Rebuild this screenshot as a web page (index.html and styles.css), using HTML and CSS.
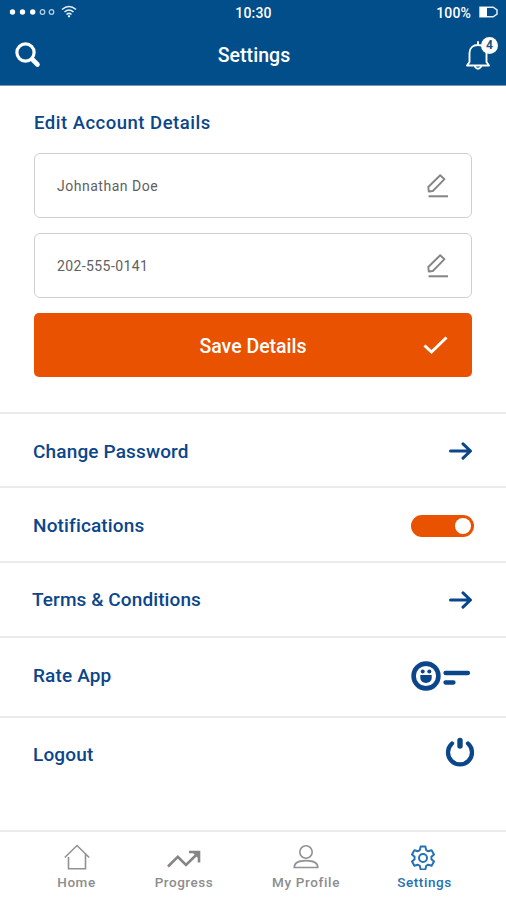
FILE: index.html
```html
<!DOCTYPE html>
<html lang="en">
<head>
<meta charset="utf-8">
<title>Settings</title>
<link rel="stylesheet" href="styles.css">
</head>
<body>
<div class="app">
  <header class="header">
    <div class="status">
      <div class="signal">
        <svg width="68" height="14" viewBox="0 0 68 14" fill="#fff">
          <circle cx="3.5" cy="7" r="2.7"/><circle cx="13.5" cy="7" r="2.7"/><circle cx="23.7" cy="7" r="2.7"/>
          <g fill="none" stroke="#bcd3e8" stroke-width="1.2"><circle cx="33.5" cy="7" r="2.3"/><circle cx="42.5" cy="7" r="2.3"/></g>
          <g fill="none" stroke="#e3eef7" stroke-width="1.6"><path d="M53 4.500Q60 -1.500 67 4.500"/><path d="M55.500 7Q60 3 64.500 7"/><path d="M57.500 9.500Q60 7.300 62.500 9.500"/></g>
          <path d="M58.600 11L60 9.900 61.400 11 60 12.800z"/>
        </svg>
      </div>
      <div class="time">10:30</div>
      <div class="power"><span>100%</span>
        <svg width="19" height="12" viewBox="0 0 19 12"><path d="M1 1.200H14.200L18 4V8L14.200 10.800H1z" fill="none" stroke="#e3eef7" stroke-width="1.500"/><path d="M1 1H8V11H1z" fill="#fff"/></svg>
      </div>
    </div>
    <div class="bar">
      <svg class="search" width="26" height="26" viewBox="0 0 26 26" fill="none" stroke="#fff"><circle cx="10.500" cy="10.500" r="8.600" stroke-width="3.200"/><path d="M17.500 17.500L22.500 22.500" stroke-width="4.600" stroke-linecap="round"/></svg>
      <h1>Settings</h1>
      <div class="bell">
        <svg width="26" height="30" viewBox="0 0 26 30" fill="none" stroke="#fff" stroke-width="1.900" stroke-linejoin="round" stroke-linecap="round"><path d="M13 2V4.500M2 25.500H24L21.500 22V13C21.500 8 18 5 13 5S4.500 8 4.500 13V22z"/><path d="M9.800 26.500Q13 31 16.200 26.500"/></svg>
        <span class="badge">4</span>
      </div>
    </div>
  </header>

  <section class="account">
    <h2>Edit Account Details</h2>
    <div class="field"><span>Johnathan Doe</span>
      <svg width="22" height="24" viewBox="0 0 22 24" fill="none" stroke="#858585" stroke-width="1.900" stroke-linejoin="round"><path d="M1.300 13L13.200 1.300 17.500 5.200 5.800 17 1.800 17.500z"/><path d="M1.500 22.300H21" stroke-width="2"/></svg>
    </div>
    <div class="field"><span class="phone">202-555-0141</span>
      <svg width="22" height="24" viewBox="0 0 22 24" fill="none" stroke="#858585" stroke-width="1.900" stroke-linejoin="round"><path d="M1.300 13L13.200 1.300 17.500 5.200 5.800 17 1.800 17.500z"/><path d="M1.500 22.300H21" stroke-width="2"/></svg>
    </div>
    <button class="save"><span>Save Details</span>
      <svg width="25" height="19" viewBox="0 0 25 19" fill="none" stroke="#fff" stroke-width="3"><path d="M1.500 9.500L8.500 16 23.500 1.500"/></svg>
    </button>
  </section>

  <main class="list">
    <div class="row"><span class="pw">Change Password</span>
      <svg class="arrow" width="24" height="18" viewBox="0 0 24 18"><path d="M1.500 9H21M14 1.800L21.500 9 14 16.200"/></svg></div>
    <div class="row toggle-row"><span class="notif">Notifications</span><span class="toggle"><i></i></span></div>
    <div class="row"><span class="terms">Terms &amp; Conditions</span>
      <svg class="arrow" width="24" height="18" viewBox="0 0 24 18"><path d="M1.500 9H21M14 1.800L21.500 9 14 16.200"/></svg></div>
    <div class="row rate"><span class="rate-label">Rate App</span>
      <svg class="face" width="60" height="30" viewBox="0 0 60 30" fill="#0b468b"><circle cx="15" cy="15" r="12.400" fill="none" stroke="#0b468b" stroke-width="4.600"/><circle cx="11.700" cy="10.600" r="2"/><circle cx="18.300" cy="10.600" r="2"/><path d="M9.300 14H20.700V17A5.700 5 0 0 1 9.300 17z"/><g stroke="#0b468b" stroke-width="4.300" stroke-linecap="round"><path d="M34.500 12H57M34.500 21.500H42.500"/></g></svg></div>
    <div class="row logout"><span class="out-label">Logout</span>
      <svg class="powericon" width="30" height="30" viewBox="0 0 30 30" fill="none" stroke="#0b468b" stroke-linecap="round"><path d="M7 6.500A12 12 0 1 0 23 6.500" stroke-width="4.300"/><path d="M15 3.500V9" stroke-width="5.400"/></svg></div>
  </main>

  <nav class="tabs">
    <div class="tab home"><svg width="26" height="26" viewBox="0 0 26 26" fill="none" stroke="#929292" stroke-width="1.600"><path d="M.8 13.500L13 1.500 25.200 13.500M4.500 13V24.800H21.500V10"/></svg><span>Home</span></div>
    <div class="tab progress"><svg width="34" height="26" viewBox="0 0 34 26" fill="none" stroke="#858585" stroke-width="2.600"><path d="M1 22.500L10.800 12.800 19 21 31 9.200M22 8H32V18.500"/><path d="M25 8H32V15z" fill="#858585" stroke="none"/></svg><span>Progress</span></div>
    <div class="tab profile"><svg width="26" height="26" viewBox="0 0 26 26" fill="none" stroke="#929292" stroke-width="1.600"><circle cx="13" cy="8" r="6.200"/><path d="M1.200 23.500C1.200 18 6 16.600 13 16.600S24.800 18 24.800 23.500z"/></svg><span>My Profile</span></div>
    <div class="tab active"><svg width="26" height="26" viewBox="-12 -14 26 26" fill="none" stroke="#2571b2" stroke-width="2" stroke-linejoin="round"><path d="M-3.200-7.900L-2.400-11.400H2.400L3.200-7.900 5.240-6.720 8.600-7.800 11-3.600 8.440-1.180V1.180L11 3.600 8.600 7.800 5.240 6.720 3.200 7.900 2.400 11.400H-2.400L-3.200 7.900-5.240 6.720-8.600 7.800-11 3.600-8.440 1.180V-1.180L-11-3.600-8.600-7.800-5.240-6.720z"/><circle r="4"/></svg><span>Settings</span></div>
  </nav>
</div>
</body>
</html>
```
FILE: styles.css
```css
* { box-sizing: border-box; }
body { margin: 0; background: #fff; font-family: Roboto, "Liberation Sans", sans-serif; font-weight: 500; }
svg { display: block; flex: none; }
h1, h2 { margin: 0; font-weight: 500; }
.app { width: 506px; height: 900px; display: flex; flex-direction: column; overflow: hidden; }

.header { height: 86px; flex: none; background: #014e8a; border-bottom: 1px solid #7298bd; color: #fff; }
.status { height: 24px; display: grid; grid-template-columns: 1fr auto 1fr; align-items: center; padding: 0 8px 0 9px; font-size: 14px; letter-spacing: .15px; }
.time, .power span { padding-top: 1px; }
.power { display: flex; justify-content: flex-end; align-items: center; gap: 8px; }
.bar { height: 61px; display: grid; grid-template-columns: 1fr auto 1fr; align-items: center; padding: 1px 13px 0 15px; }
.bar h1 { font-size: 19.5px; letter-spacing: .05px; line-height: 24px; padding-top: 2px; }
.bell { justify-self: end; position: relative; width: 28px; height: 30px; }
.badge { position: absolute; left: 16px; top: -3px; width: 17px; height: 17px; border-radius: 50%; background: #fff; color: #1b4f82; font-size: 12px; line-height: 17px; text-align: center; font-weight: 700; }

.account { height: 326px; flex: none; padding: 25px 34px 0; color: #0b468b; }
.account h2 { font-size: 18.5px; letter-spacing: .5px; line-height: 24px; margin-bottom: 18px; }
.field { height: 65px; margin-bottom: 15px; border: 1.500px solid #cfcfcf; border-radius: 6px; display: flex; align-items: center; justify-content: space-between; padding: 0 22px; color: #606060; font-size: 14px; letter-spacing: .52px; font-weight: 400; }
.phone { letter-spacing: .4px; }
.save { width: 100%; height: 64px; border: 0; border-radius: 5px; background: #e85200; color: #fff; font: inherit; font-size: 19.5px; letter-spacing: 0; display: grid; grid-template-columns: 1fr auto 1fr; align-items: center; padding: 1px 24px 0; }
.save span { grid-column: 2; padding-top: 1px; }
.save svg { justify-self: end; }

.list { color: #0b468b; font-size: 19px; letter-spacing: .15px; }
.row { height: 75px; border-top: 2px solid #ebebeb; display: flex; align-items: center; justify-content: space-between; padding: 0 33px; }
.row:first-child { height: 74px; padding-top: 2px; }
.toggle-row { padding-top: 2px; }
.row > .terms { margin-left: -1px; letter-spacing: .1px; }
.arrow { fill: none; stroke: #0b468b; stroke-width: 3; stroke-linecap: round; stroke-linejoin: round; }
.toggle { width: 63px; height: 22px; margin-right: -1px; border-radius: 11px; background: #e85200; display: flex; justify-content: flex-end; align-items: center; padding-right: 3px; }
.toggle i { width: 16px; height: 16px; border-radius: 50%; background: #fff; }
.rate { height: 80px; padding: 0 35px 3px 33px; }
.logout { height: 114px; align-items: flex-start; padding: 19px 31px 0 33px; }
.out-label { line-height: 36px; }

.tabs { flex: 1; border-top: 2px solid #ebebeb; display: grid; grid-template-columns: 107px 108px 136px 101px; padding: 12px 0 0 23px; color: #8d8d8d; font-size: 13.5px; letter-spacing: .55px; }
.tab { display: flex; flex-direction: column; align-items: center; gap: 3px; line-height: 18px; }
.profile { letter-spacing: .65px; }
.active { color: #2571b2; }
.active svg { translate: -1px 0; }
```
